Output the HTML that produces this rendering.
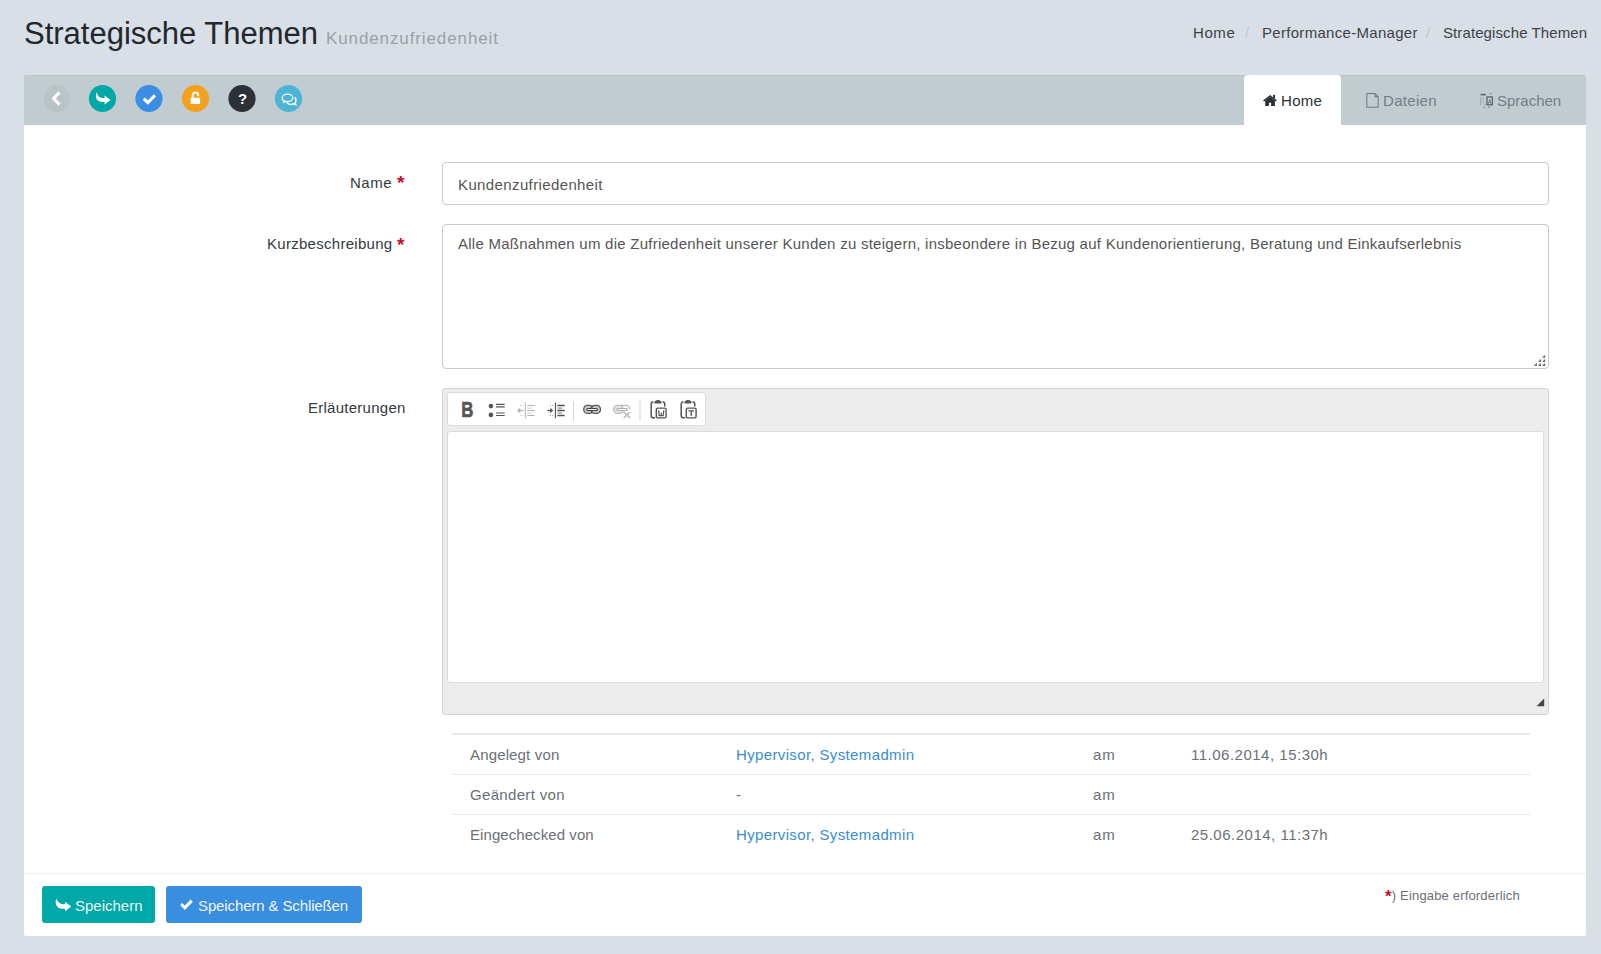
<!DOCTYPE html>
<html><head><meta charset="utf-8">
<style>
*{box-sizing:border-box;margin:0;padding:0}
html,body{width:1601px;height:954px;overflow:hidden}
body{background:#d9dfe6;font-family:"Liberation Sans",sans-serif;position:relative;color:#333}
.a{position:absolute;white-space:pre;line-height:1}
.t{font-size:15px}
#title{left:24px;top:17.5px;font-size:31px;color:#22272d;letter-spacing:0px}
#sub{left:326px;top:30px;font-size:17px;color:#9aa1a8;letter-spacing:0.89px}
.bc{top:25px;font-size:15px;color:#3d4248}
.sep{top:25px;font-size:15px;color:#c3c9cf}
#panel{position:absolute;left:24px;top:75px;width:1562px;height:861px;background:#fff;border-radius:2px;overflow:hidden}
#tb{position:absolute;left:0;top:0;width:1562px;height:50px;background:#c1ccd1}
.c{position:absolute;top:10px;width:27px;height:27px;border-radius:50%}
.tab{position:absolute;top:0;height:50px}
.lbl{font-size:15px;color:#333a40}
.req{color:#c8102e;font-weight:bold;font-size:19px}
.inp{position:absolute;border:1px solid #c9c9c9;border-radius:4px;background:#fff}
.tx{font-size:15px;color:#555}
.tt{font-size:15px;color:#6b7077}
.lk{font-size:15px;color:#3a8dd6}
.hr{position:absolute;left:428px;width:1078px;height:1px;background:#e6e9ec}
.btn{position:absolute;top:811px;height:37px;border-radius:3px}
.bt{font-size:15px;color:rgba(255,255,255,0.94)}
</style></head><body>
<div class="a" id="title">Strategische Themen</div>
<div class="a" id="sub">Kundenzufriedenheit</div>
<div class="a bc" style="left:1193px;letter-spacing:0.6px">Home</div>
<div class="a sep" style="left:1245px">/</div>
<div class="a bc" style="left:1262px;letter-spacing:0.3px">Performance-Manager</div>
<div class="a sep" style="left:1426px">/</div>
<div class="a bc" style="left:1443px;letter-spacing:0.1px">Strategische Themen</div>

<div id="panel">
  <div id="tb">
    <div style="position:absolute;left:0;top:0;width:1562px;height:1px;background:#bcc6cc"></div>
    <div class="tab" style="left:1220px;width:97px;background:#fff;border-radius:4px 4px 0 0"></div>
    <div class="a t" style="left:1257px;top:18px;color:#2b3035;letter-spacing:0.3px">Home</div>
    <div class="a t" style="left:1359px;top:18px;color:#737d86;letter-spacing:0.3px">Dateien</div>
    <div class="a t" style="left:1473px;top:18px;color:#737d86">Sprachen</div>
  </div>

  <div class="a lbl" style="left:326px;top:100px;letter-spacing:0.5px">Name</div>
  <div class="a req" style="left:373px;top:98px">*</div>
  <div class="inp" style="left:418px;top:87px;width:1107px;height:43px"></div>
  <div class="a tx" style="left:434px;top:101.5px;letter-spacing:0.38px">Kundenzufriedenheit</div>

  <div class="a lbl" style="left:243px;top:161px;letter-spacing:0.28px">Kurzbeschreibung</div>
  <div class="a req" style="left:373px;top:160px">*</div>
  <div class="inp" style="left:418px;top:149px;width:1107px;height:145px"></div>
  <div class="a tx" style="left:434px;top:161px;letter-spacing:0.25px">Alle Maßnahmen um die Zufriedenheit unserer Kunden zu steigern, insbeondere in Bezug auf Kundenorientierung, Beratung und Einkaufserlebnis</div>

  <div class="a lbl" style="left:284px;top:325px;letter-spacing:0.26px">Erläuterungen</div>
  <div class="inp" style="left:418px;top:313px;width:1107px;height:327px;background:#ececec;border-color:#d3d3d3;border-radius:3px"></div>
  <div class="inp" style="left:423px;top:317px;width:259px;height:34px;border-color:#dcdcdc;border-radius:3px"></div>
  <div class="inp" style="left:423px;top:356px;width:1097px;height:252px;border-color:#dcdcdc;border-radius:3px"></div>

  <div class="hr" style="top:658px;height:2px"></div>
  <div class="hr" style="top:699px"></div>
  <div class="hr" style="top:739px"></div>
  <div class="a tt" style="left:446px;top:672px;letter-spacing:0.15px">Angelegt von</div>
  <div class="a lk" style="left:712px;top:671.5px;letter-spacing:0.36px">Hypervisor, Systemadmin</div>
  <div class="a tt" style="left:1069px;top:672px;letter-spacing:1px">am</div>
  <div class="a tt" style="left:1167px;top:672px;letter-spacing:0.5px">11.06.2014, 15:30h</div>
  <div class="a tt" style="left:446px;top:712px;letter-spacing:0.33px">Geändert von</div>
  <div class="a tt" style="left:712px;top:712px">-</div>
  <div class="a tt" style="left:1069px;top:712px;letter-spacing:1px">am</div>
  <div class="a tt" style="left:446px;top:752px;letter-spacing:0.07px">Eingechecked von</div>
  <div class="a lk" style="left:712px;top:751.5px;letter-spacing:0.36px">Hypervisor, Systemadmin</div>
  <div class="a tt" style="left:1069px;top:752px;letter-spacing:1px">am</div>
  <div class="a tt" style="left:1167px;top:752px;letter-spacing:0.5px">25.06.2014, 11:37h</div>

  <div style="position:absolute;left:0;top:798px;width:1562px;height:1px;background:#eceef0"></div>
  <div class="btn" style="left:18px;width:113px;background:#00a9a8"></div>
  <div class="a bt" style="left:51px;top:823px">Speichern</div>
  <div class="btn" style="left:142px;width:196px;background:#3a8ee0"></div>
  <div class="a bt" style="left:174px;top:823px;letter-spacing:-0.12px">Speichern &amp; Schließen</div>
  <div class="a" style="left:1361px;top:813.5px;font-size:13px;color:#6b7077;letter-spacing:0.17px"><span style="color:#c8102e;font-weight:bold;font-size:17px;vertical-align:top;position:relative;top:-1px">*</span>) Eingabe erforderlich</div>
</div>

<svg id="ov" width="1601" height="954" viewBox="0 0 1601 954" style="position:absolute;left:0;top:0;pointer-events:none">
  <!-- toolbar circle icons -->
  <circle cx="57" cy="98.5" r="13.5" fill="#b9c3ca"/>
  <polyline points="59.6,92.4 53.6,98.5 59.6,104.6" fill="none" stroke="#fff" stroke-width="3"/>
  <circle cx="102.5" cy="98.5" r="13.6" fill="#00a8a8"/>
  <path d="M96.6,92.2 C95.4,95.2 95.6,98.4 97.8,100.4 C99.4,101.8 101.6,102.1 104.6,102.1 L104.6,104.4 L110.4,100 L104.6,95.6 L104.6,98 C102,98 100,97.7 98.8,96.4 C97.8,95.3 97.2,93.8 96.6,92.2 Z" fill="#fff"/>
  <circle cx="149" cy="98.5" r="13.6" fill="#3a8ee3"/>
  <polyline points="143.8,98.6 147.8,102.6 155,95.4" fill="none" stroke="#fff" stroke-width="3.2"/>
  <circle cx="195.5" cy="98.5" r="13.6" fill="#f5a11e"/>
  <rect x="190.7" y="97.8" width="9.4" height="6.1" fill="#fff"/>
  <path d="M192.7,98 V95.2 A2.75,2.75 0 0 1 198.2,95.2 V96.2" fill="none" stroke="#fff" stroke-width="2"/>
  <circle cx="242" cy="98.5" r="13.6" fill="#2b3137"/>
  <text x="242.5" y="104.3" text-anchor="middle" font-family="Liberation Sans" font-weight="bold" font-size="15" fill="#fff">?</text>
  <circle cx="288.5" cy="98.5" r="13.6" fill="#4db4d6"/>
  <path d="M294.6,97.4 C296.4,98.6 296.4,101.4 295,103 L295.8,104.8 L293,103.8 C291.4,104.6 289,104.6 287.6,103.2 L286.6,102.6" fill="none" stroke="#fff" stroke-width="1.4"/>
  <ellipse cx="287.5" cy="97.9" rx="5.3" ry="3.7" fill="#4db4d6" stroke="#fff" stroke-width="1.3"/>
  <path d="M284.4,100.6 L283,102.8 L286.4,101.4" fill="#fff" stroke="#fff" stroke-width="0.8"/>

  <!-- tab icons -->
  <path d="M1263,100.6 L1270.1,95 L1277,100.6 L1275.9,101.4 L1270.1,96.8 L1264.1,101.4 Z" fill="#2b3035"/>
  <rect x="1273.1" y="94.9" width="2" height="3.5" fill="#2b3035"/>
  <path d="M1265.2,100.6 L1270.1,96.8 L1274.9,100.6 V105.9 H1271.1 V102.8 H1268.9 V105.9 H1265.2 Z" fill="#2b3035"/>
  <path d="M1366.8,93.4 H1375 L1378.2,96.6 V107.2 H1366.8 Z M1375,93.4 V96.6 H1378.2" fill="none" stroke="#6f7a83" stroke-width="1.05"/>
  <path d="M1480.8,97 V105.5" stroke="#9aa3aa" stroke-width="1"/>
  <path d="M1480.5,94.6 H1485.8" stroke="#5f6a73" stroke-width="1.7"/>
  <path d="M1482.3,98.6 H1483.8 M1482.6,101.6 H1484 M1484.5,104.6 H1486" stroke="#98a1a8" stroke-width="1.1"/>
  <rect x="1487" y="97" width="5.3" height="7.8" fill="#cfd6da" stroke="#5f6a73" stroke-width="1.4"/>
  <path d="M1488.4,103.8 L1489.65,99.2 L1490.9,103.8 M1488.9,102.4 H1490.4" fill="none" stroke="#6a747c" stroke-width="0.9"/>
  <path d="M1489.8,93.5 H1491.5 M1483,107.4 H1484.6 M1488.2,107.4 H1489.8" stroke="#7d878f" stroke-width="1.1"/>
  <!-- editor toolbar icons -->
  <text x="461.2" y="417.5" font-family="Liberation Sans" font-weight="bold" font-size="21.5" fill="#575757" stroke="#575757" stroke-width="0.7" transform="translate(461.2 0) scale(0.78 1) translate(-461.2 0)">B</text>
  <circle cx="490.9" cy="406.1" r="2.3" fill="#555"/>
  <circle cx="490.9" cy="414.9" r="2.3" fill="#555"/>
  <path d="M496,404.3 H504.7 M496,406.8 H504.7 M496,413 H504.7 M496,415.5 H504.7" stroke="#555" stroke-width="1.2"/>
  <!-- outdent -->
  <g stroke="#b3b3b3">
  <path d="M525.3,402.5 V418.3" stroke-width="1"/>
  <path d="M527.3,405.5 H534.6 M527.3,410.5 H534.6 M527.3,415.5 H534.6" stroke-width="1.1"/>
  <path d="M527.3,408.1 H532.2 M527.3,413 H532.2" stroke-width="1" stroke="#cacaca"/>
  <path d="M519,410.5 H523.4" stroke-width="1.2"/>
  <path d="M520.2,408.6 L518,410.5 L520.2,412.4" fill="none" stroke-width="1.4"/>
  <path d="M520,405.5 H521 M522.2,405.5 H523.2 M520,415.5 H521 M522.2,415.5 H523.2" stroke-width="1" stroke="#c8c8c8"/>
  </g>
  <!-- indent -->
  <g stroke="#4f4f4f">
  <path d="M555.4,402.5 V418.3" stroke-width="1.1"/>
  <path d="M557.4,405.5 H564.7 M557.4,410.5 H564.7 M557.4,415.5 H564.7" stroke-width="1.3"/>
  <path d="M557.4,408.1 H562.2 M557.4,413 H562.2" stroke-width="1" stroke="#777"/>
  <path d="M547.4,410.5 H551.6" stroke-width="1.3"/>
  <path d="M550.6,408.4 L552.9,410.5 L550.6,412.6 Z" fill="#4f4f4f" stroke-width="0.6"/>
  <path d="M550,405.5 H551 M552.2,405.5 H553.2 M550,415.5 H551 M552.2,415.5 H553.2" stroke-width="1" stroke="#999"/>
  </g>
  <path d="M573.5,401.5 V421" stroke="#d6d6d6" stroke-width="1"/>
  <!-- link -->
  <rect x="583.7" y="405.3" width="9.6" height="8.1" rx="4" fill="#c9c9c9" stroke="#585858" stroke-width="1.3"/>
  <rect x="590.9" y="405.3" width="9.6" height="8.1" rx="4" fill="#c9c9c9" stroke="#585858" stroke-width="1.3"/>
  <rect x="586.8" y="408.5" width="10.6" height="2" rx="1" fill="#fafafa" stroke="#444" stroke-width="1.1"/>
  <path d="M592.1,406.2 V407.6 M592.1,411.4 V412.8" stroke="#444" stroke-width="1.6"/>
  <!-- unlink -->
  <rect x="613.7" y="405.3" width="9.6" height="8.1" rx="4" fill="#e6e6e6" stroke="#bcbcbc" stroke-width="1.3"/>
  <path d="M621,405.3 H625.8 A4,4 0 0 1 629.8,409.3" fill="none" stroke="#bcbcbc" stroke-width="1.3"/>
  <rect x="616.8" y="408.5" width="10.6" height="2" rx="1" fill="#fcfcfc" stroke="#b0b0b0" stroke-width="1.1"/>
  <path d="M623.8,412 L630,418 M630,412 L623.8,418" stroke="#b8b8b8" stroke-width="1.7"/>
  <path d="M640,400.5 V421" stroke="#d6d6d6" stroke-width="1"/>
  <!-- paste word -->
  <g fill="none" stroke="#555" transform="translate(0 0)">
  <path d="M653.4,401.7 Q651.2,401.9 651.2,404.2 V415.4 Q651.2,417.8 653.6,417.8 H655.2" stroke-width="1.5"/>
  <path d="M662.6,401.7 Q664.8,401.9 664.8,404.2 V406.6" stroke-width="1.5"/>
  <rect x="656.3" y="408.1" width="9.8" height="9.8" rx="1.4" stroke-width="1.4"/>
  <path d="M658.6,410.4 L659.2,415.7 H663.2 L663.8,410.4 M661.2,412.6 V415.7" stroke-width="1.2"/>
  <path d="M654.3,403.5 Q654.3,400 658,400 Q661.7,400 661.7,403.5 Z" fill="#555" stroke="none"/>
  </g>
  <g fill="none" stroke="#555" transform="translate(30 0)">
  <path d="M653.4,401.7 Q651.2,401.9 651.2,404.2 V415.4 Q651.2,417.8 653.6,417.8 H655.2" stroke-width="1.5"/>
  <path d="M662.6,401.7 Q664.8,401.9 664.8,404.2 V406.6" stroke-width="1.5"/>
  <rect x="656.3" y="408.1" width="9.8" height="9.8" rx="1.4" stroke-width="1.4"/>
  <path d="M658.4,410.9 H664 M661.2,410.9 V416" stroke-width="1.3"/>
  <path d="M654.3,403.5 Q654.3,400 658,400 Q661.7,400 661.7,403.5 Z" fill="#555" stroke="none"/>
  </g>
  <!-- textarea grip -->
  <g><rect x="1542.3" y="355" width="2.8" height="2.8" fill="#e0e0e0"/><path d="M1545.1,355 V357.8 H1542.3 Z" fill="#666"/><rect x="1538.2" y="359.1" width="2.8" height="2.8" fill="#e0e0e0"/><path d="M1541.0,359.1 V361.9 H1538.2 Z" fill="#666"/><rect x="1542.3" y="359.1" width="2.8" height="2.8" fill="#e0e0e0"/><path d="M1545.1,359.1 V361.9 H1542.3 Z" fill="#666"/><rect x="1534.1" y="363.1" width="2.8" height="2.8" fill="#e0e0e0"/><path d="M1536.9,363.1 V365.9 H1534.1 Z" fill="#666"/><rect x="1538.2" y="363.1" width="2.8" height="2.8" fill="#e0e0e0"/><path d="M1541.0,363.1 V365.9 H1538.2 Z" fill="#666"/><rect x="1542.3" y="363.1" width="2.8" height="2.8" fill="#e0e0e0"/><path d="M1545.1,363.1 V365.9 H1542.3 Z" fill="#666"/></g>
  <!-- editor resize triangle -->
  <path d="M1544.2,698.5 V706.2 H1536.6 Z" fill="#444"/>

  <!-- button icons -->
  <path d="M56.3,898.5 C55.2,901.5 55.4,904.8 57.6,906.9 C59.2,908.4 61.6,908.7 65,908.7 L65,911.2 L71.2,906.5 L65,901.8 L65,904.3 C62.2,904.3 60.2,904 58.9,902.6 C57.8,901.5 57,900.1 56.3,898.5 Z" fill="#fff"/>
  <polyline points="181.2,904 184.8,907.8 191.8,900.6" fill="none" stroke="#fff" stroke-width="3"/>
</svg>
</body></html>
